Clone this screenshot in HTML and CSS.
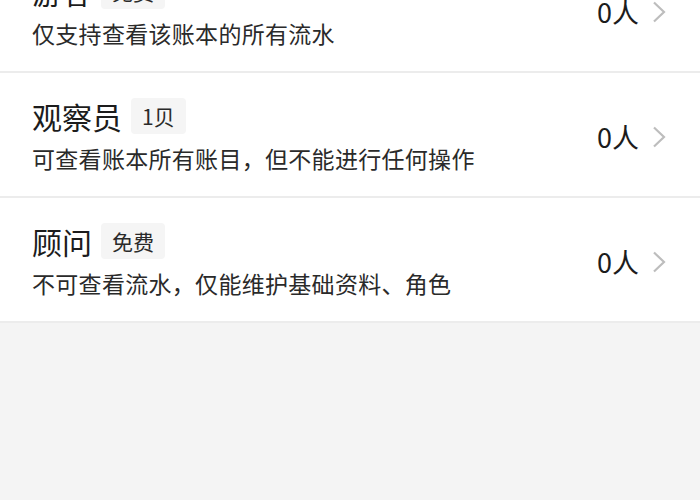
FILE: index.html
```html
<!DOCTYPE html>
<html lang="zh">
<head>
<meta charset="utf-8">
<link rel="stylesheet" href="styles.css">
</head>
<body>
<div class="viewport">
  <ul class="roles">
    <li class="role">
      <div class="info">
        <div class="head"><span class="name">游客</span><span class="badge">免费</span></div>
        <div class="desc">仅支持查看该账本的所有流水</div>
      </div>
      <div class="count">0人<span class="chev"><svg width="14" height="22" viewBox="0 0 14 22"><path d="M2 1.5 L12 11 L2 20.5" fill="none" stroke="#bdbdbd" stroke-width="2.2"/></svg></span></div>
    </li>
    <li class="role">
      <div class="info">
        <div class="head"><span class="name">观察员</span><span class="badge">1贝</span></div>
        <div class="desc">可查看账本所有账目，但不能进行任何操作</div>
      </div>
      <div class="count">0人<span class="chev"><svg width="14" height="22" viewBox="0 0 14 22"><path d="M2 1.5 L12 11 L2 20.5" fill="none" stroke="#bdbdbd" stroke-width="2.2"/></svg></span></div>
    </li>
    <li class="role">
      <div class="info">
        <div class="head"><span class="name">顾问</span><span class="badge">免费</span></div>
        <div class="desc">不可查看流水，仅能维护基础资料、角色</div>
      </div>
      <div class="count">0人<span class="chev"><svg width="14" height="22" viewBox="0 0 14 22"><path d="M2 1.5 L12 11 L2 20.5" fill="none" stroke="#bdbdbd" stroke-width="2.2"/></svg></span></div>
    </li>
  </ul>
</div>
</body>
</html>
```
FILE: styles.css
```css
html, body {
  margin: 0;
  padding: 0;
  background: #f4f4f4;
  font-family: "Noto Sans CJK SC", "Noto Sans", sans-serif;
}
.viewport {
  width: 700px;
  height: 500px;
  overflow: hidden;
}
.roles {
  list-style: none;
  margin: -52px 0 0 0;
  padding: 0;
}
.role {
  display: flex;
  align-items: center;
  justify-content: space-between;
  height: 123px;
  background: #fff;
  border-bottom: 2px solid #ececec;
  padding: 0 34px 0 32px;
}
.info {
  display: flex;
  flex-direction: column;
  gap: 8px;
}
.head {
  display: flex;
  align-items: center;
  gap: 9px;
  height: 38px;
}
.name {
  font-size: 30px;
  line-height: 38px;
  color: #1c1c1c;
}
.badge {
  background: #f5f5f5;
  color: #2a2a2a;
  font-size: 21px;
  line-height: 36px;
  padding: 0 11px;
  border-radius: 4px;
}
.desc {
  font-size: 23px;
  line-height: 30px;
  letter-spacing: 0.3px;
  color: #2a2a2a;
}
.count {
  display: flex;
  align-items: center;
  gap: 13px;
  font-size: 27px;
  color: #1c1c1c;
  margin-top: 4px;
}
.chev {
  display: flex;
}
```
